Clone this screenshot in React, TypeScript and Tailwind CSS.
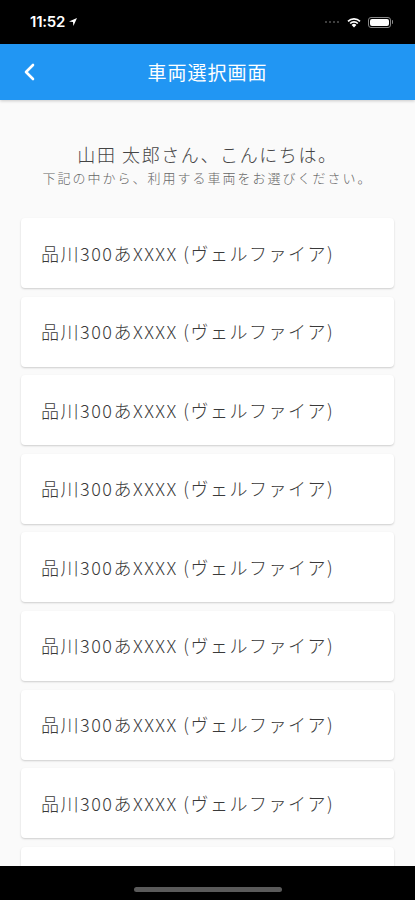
import React from "react";

const cars = Array.from({ length: 8 }, () => "品川300あXXXX (ヴェルファイア)");

function StatusBar() {
  return (
    <div className="h-[44px] bg-black flex items-center justify-between pl-[30px] pr-[22px] text-white">
      <div className="flex items-center gap-[3px]">
        <span className="text-[15px] font-semibold tracking-[-0.2px]" style={{ fontFamily: "Inter, sans-serif" }}>
          11:52
        </span>
        <svg width="10" height="10" viewBox="0 0 10 10">
          <path d="M9 1 L1 4.6 L5 5 L5.4 9 Z" fill="white" />
        </svg>
      </div>
      <div className="flex items-center gap-[6px]">
        <div className="flex gap-[2px] mr-[1px]">
          {[0, 1, 2, 3].map((i) => (
            <div key={i} className="w-[2px] h-[2px] rounded-full bg-[#555]" />
          ))}
        </div>
        <svg width="16" height="12" viewBox="0 0 16 12">
          <path d="M8 11.5 L5.6 8.9 A3.4 3.4 0 0 1 10.4 8.9 Z" fill="white" />
          <path d="M3.6 6.9 A6.2 6.2 0 0 1 12.4 6.9 L11.2 8.1 A4.5 4.5 0 0 0 4.8 8.1 Z" fill="white" />
          <path d="M1.4 4.7 A9.3 9.3 0 0 1 14.6 4.7 L13.4 5.9 A7.6 7.6 0 0 0 2.6 5.9 Z" fill="white" />
        </svg>
        <div className="flex items-center">
          <div className="w-[23px] h-[11px] rounded-[3px] border border-[#888] p-[1px]">
            <div className="w-full h-full rounded-[2px] bg-white" />
          </div>
          <div className="w-[1.5px] h-[4px] rounded-r-sm bg-[#888] ml-[1px]" />
        </div>
      </div>
    </div>
  );
}

function Header() {
  return (
    <div className="relative h-[56px] bg-[#2196f3] flex items-center justify-center shadow-[0_1px_3px_rgba(0,0,0,0.2)] z-10">
      <svg className="absolute left-[22px] top-[19px]" width="14" height="18" viewBox="0 0 14 18">
        <path d="M11 2 L4 9 L11 16" stroke="white" strokeWidth="2.6" fill="none" strokeLinecap="round" strokeLinejoin="round" />
      </svg>
      <span className="text-white text-[19px] tracking-[1px]">車両選択画面</span>
    </div>
  );
}

export default function App() {
  return (
    <div
      className="w-[415px] h-[900px] flex flex-col bg-[#fafafa] overflow-hidden"
      style={{ fontFamily: '"Noto Sans CJK JP", "Noto Sans", sans-serif' }}
    >
      <StatusBar />
      <Header />
      <div className="flex-1 overflow-hidden px-[21px] pt-[41px]">
        <div className="flex flex-col items-center">
          <p className="text-[18px] leading-[26px] text-[#444] font-light tracking-[1.6px]">山田 太郎さん、こんにちは。</p>
          <p className="text-[13px] leading-[20px] text-[#666] font-light tracking-[2px] mt-[1px]">
            下記の中から、利用する車両をお選びください。
          </p>
        </div>
        <div className="flex flex-col gap-[8.6px] mt-[30px]">
          {cars.map((c, i) => (
            <div
              key={i}
              className="h-[70px] shrink-0 bg-white rounded-[4px] shadow-[0_1px_2px_rgba(0,0,0,0.18)] flex items-center px-[20px]"
            >
              <span className="text-[18px] text-[#3a3a3a] font-light tracking-[1.5px]">{c}</span>
            </div>
          ))}
          <div className="h-[70px] shrink-0 bg-white rounded-[4px] shadow-[0_1px_2px_rgba(0,0,0,0.18)]" />
        </div>
      </div>
      <div className="h-[34px] bg-black flex justify-center items-end pb-[8px]">
        <div className="w-[148px] h-[5px] rounded-full bg-[#5a5a5a]" />
      </div>
    </div>
  );
}
